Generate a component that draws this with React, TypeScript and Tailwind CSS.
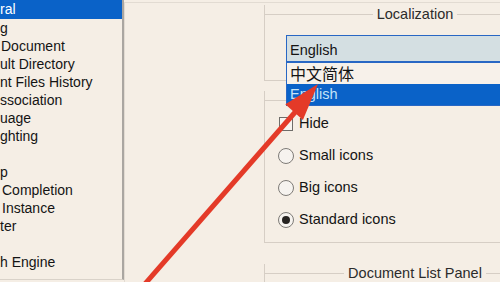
import React from "react";

const items = [
  "ral",
  "g",
  "Document",
  "ult Directory",
  "nt Files History",
  "ssociation",
  "uage",
  "ghting",
  "",
  "p",
  "Completion",
  "Instance",
  "ter",
  "",
  "h Engine",
];

function Group({
  title,
  className,
  children,
}: {
  title: string;
  className: string;
  children?: React.ReactNode;
}) {
  return (
    <div className={className}>
      <div className="flex items-start h-[18px] -mt-[9px]">
        <div className="flex-1 mt-[9px] border-t border-[#d6cec5]" />
        <span className="px-[4px] text-[14.5px] leading-[18px] text-[#2b2b2b]">{title}</span>
        <div className="flex-1 mt-[9px] border-t border-[#d6cec5]" />
      </div>
      {children}
    </div>
  );
}

function Radio({ checked }: { checked?: boolean }) {
  return (
    <div className="w-[16px] h-[16px] rounded-full border border-[#7e7b77] bg-[#f6f3ef] flex items-center justify-center">
      {checked && <div className="w-[8px] h-[8px] rounded-full bg-[#262321]" />}
    </div>
  );
}

export default function App() {
  return (
    <div className="relative w-[500px] h-[282px] overflow-hidden bg-[#f5eee5] flex font-['Liberation_Sans','Noto_Sans_CJK_SC',sans-serif] text-[#141414]">
      <div className="w-[124px] h-[280px] shrink-0 border-r-2 border-b border-r-[#aaa6a1] border-b-[#d9d2c9] text-[14px]">
        {items.map((t, i) => (
          <div
            key={i}
            className={
              i === 0
                ? "h-[19px] leading-[19px] bg-[#0a62c8] text-white whitespace-nowrap"
                : "h-[18px] leading-[18px] whitespace-nowrap"
            }
          >
            <span className={t === "Document" ? "pl-[1px]" : t === "Completion" || t === "Instance" ? "pl-[2px]" : ""}>
              {t}
            </span>
          </div>
        ))}
      </div>

      <div className="flex-1 min-w-0 mt-[2px] border-t border-l border-[#e2dbd2] pl-[139px] pt-[11px] overflow-hidden">
        <Group title="Localization" className="w-[302px] border-x border-b border-[#d6cec5]">
          <div className="relative h-[57px]">
            <div className="absolute left-[21px] top-[12px] w-[260px] border border-[#2867c4] bg-[#f7f1ea] z-10">
              <div className="h-[27px] bg-[#d4dfe2] border-b-2 border-[#2867c4] pl-[3px] pt-[2px] leading-[24px] text-[14.5px]">
                English
              </div>
              <div className="h-[21px] pl-[3px] pt-[1px] leading-[22px] text-[16px]">中文简体</div>
              <div className="h-[21px] pl-[3px] leading-[21px] bg-[#0a62c8] text-[#c5e3f7] text-[14.5px]">
                English
              </div>
            </div>
          </div>
        </Group>

        <Group title="Toolbar" className="w-[302px] mt-[19px] border-x border-b border-[#d6cec5]">
          <div className="-mt-px pb-[6px] text-[14.5px]">
            <div className="h-[32px] flex items-center pl-[13px] gap-[5px]">
              <div className="w-[16px] flex justify-center">
                <div className="w-[14px] h-[14px] border border-[#6f6d6a] bg-[#f7f4f0]" />
              </div>
              <span>Hide</span>
            </div>
            <div className="h-[32px] flex items-center pl-[13px] gap-[5px]">
              <Radio />
              <span>Small icons</span>
            </div>
            <div className="h-[32px] flex items-center pl-[13px] gap-[5px]">
              <Radio />
              <span>Big icons</span>
            </div>
            <div className="h-[32px] flex items-center pl-[13px] gap-[5px]">
              <Radio checked />
              <span>Standard icons</span>
            </div>
          </div>
        </Group>

        <Group title="Document List Panel" className="w-[302px] mt-[30px] border-x border-b border-[#d6cec5]">
          <div className="h-[40px]" />
        </Group>
      </div>

      <svg
        className="absolute left-0 top-0 pointer-events-none z-20"
        width="500"
        height="282"
        viewBox="0 0 500 282"
      >
        <line x1="144" y1="285" x2="297" y2="110" stroke="#e43a28" strokeWidth="5" />
        <polygon points="318,84 302.9,119.9 285.3,104.3" fill="#e43a28" />
      </svg>
    </div>
  );
}
